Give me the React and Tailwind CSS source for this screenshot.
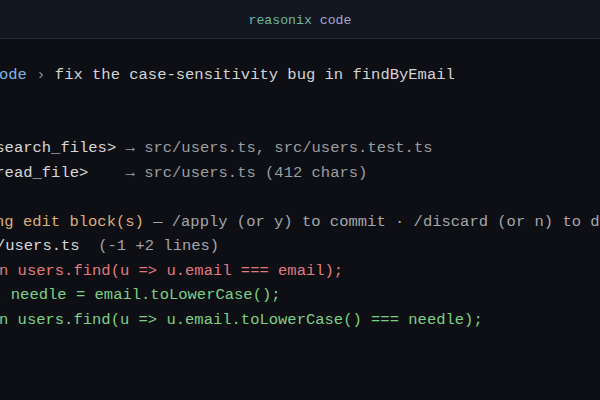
export default function App() {
  const mono = { fontFamily: '"Liberation Mono", "DejaVu Sans Mono", monospace' };
  return (
    <div className="w-[600px] h-[400px] overflow-hidden bg-[#0d0f14] flex flex-col" style={mono}>
      <div className="h-[39px] shrink-0 bg-[#131720] border-b border-[#252a35] flex items-center justify-center pt-[3px] text-[13.2px]">
        <span className="text-[#6fb8a2]">reasonix</span>
        <span className="whitespace-pre text-[#a9a6d6]"> code</span>
      </div>
      <div className="flex-1 overflow-hidden pt-[24px] text-[15.5px] leading-[24.45px] whitespace-pre text-[#d4d4d4]">
        <div className="ml-[-10.3px]">
          <span className="text-[#7eb3e0]">code</span>
          <span className="text-[#8a8f99]"> › </span>
          <span>fix the case-sensitivity bug in findByEmail</span>
        </div>
        <div>&nbsp;</div>
        <div>&nbsp;</div>
        <div className="ml-[-14px]">
          <span className="text-[#d8d8d8]">&lt;search_files&gt;</span>
          <span className="text-[#9a9da3]"> → src/users.ts, src/users.test.ts</span>
        </div>
        <div className="ml-[-14px]">
          <span className="text-[#d8d8d8]">&lt;read_file&gt;</span>
          <span className="text-[#9a9da3]">    → src/users.ts (412 chars)</span>
        </div>
        <div>&nbsp;</div>
        <div className="ml-[-51.5px]">
          <span className="text-[#dcae78]">pending edit block(s)</span>
          <span className="text-[#a3a6ab]"> — /apply (or y) to commit · /discard (or n) to discard</span>
        </div>
        <div className="ml-[-32px]">
          <span className="text-[#d8d8d8]">src/users.ts</span>
          <span className="text-[#a3a6ab]">  (-1 +2 lines)</span>
        </div>
        <div className="ml-[-47.5px] text-[#e07a7e]">return users.find(u =&gt; u.email === email);</div>
        <div className="ml-[-45px] text-[#7dcf86]">const needle = email.toLowerCase();</div>
        <div className="ml-[-47.5px] text-[#7dcf86]">return users.find(u =&gt; u.email.toLowerCase() === needle);</div>
      </div>
    </div>
  );
}
